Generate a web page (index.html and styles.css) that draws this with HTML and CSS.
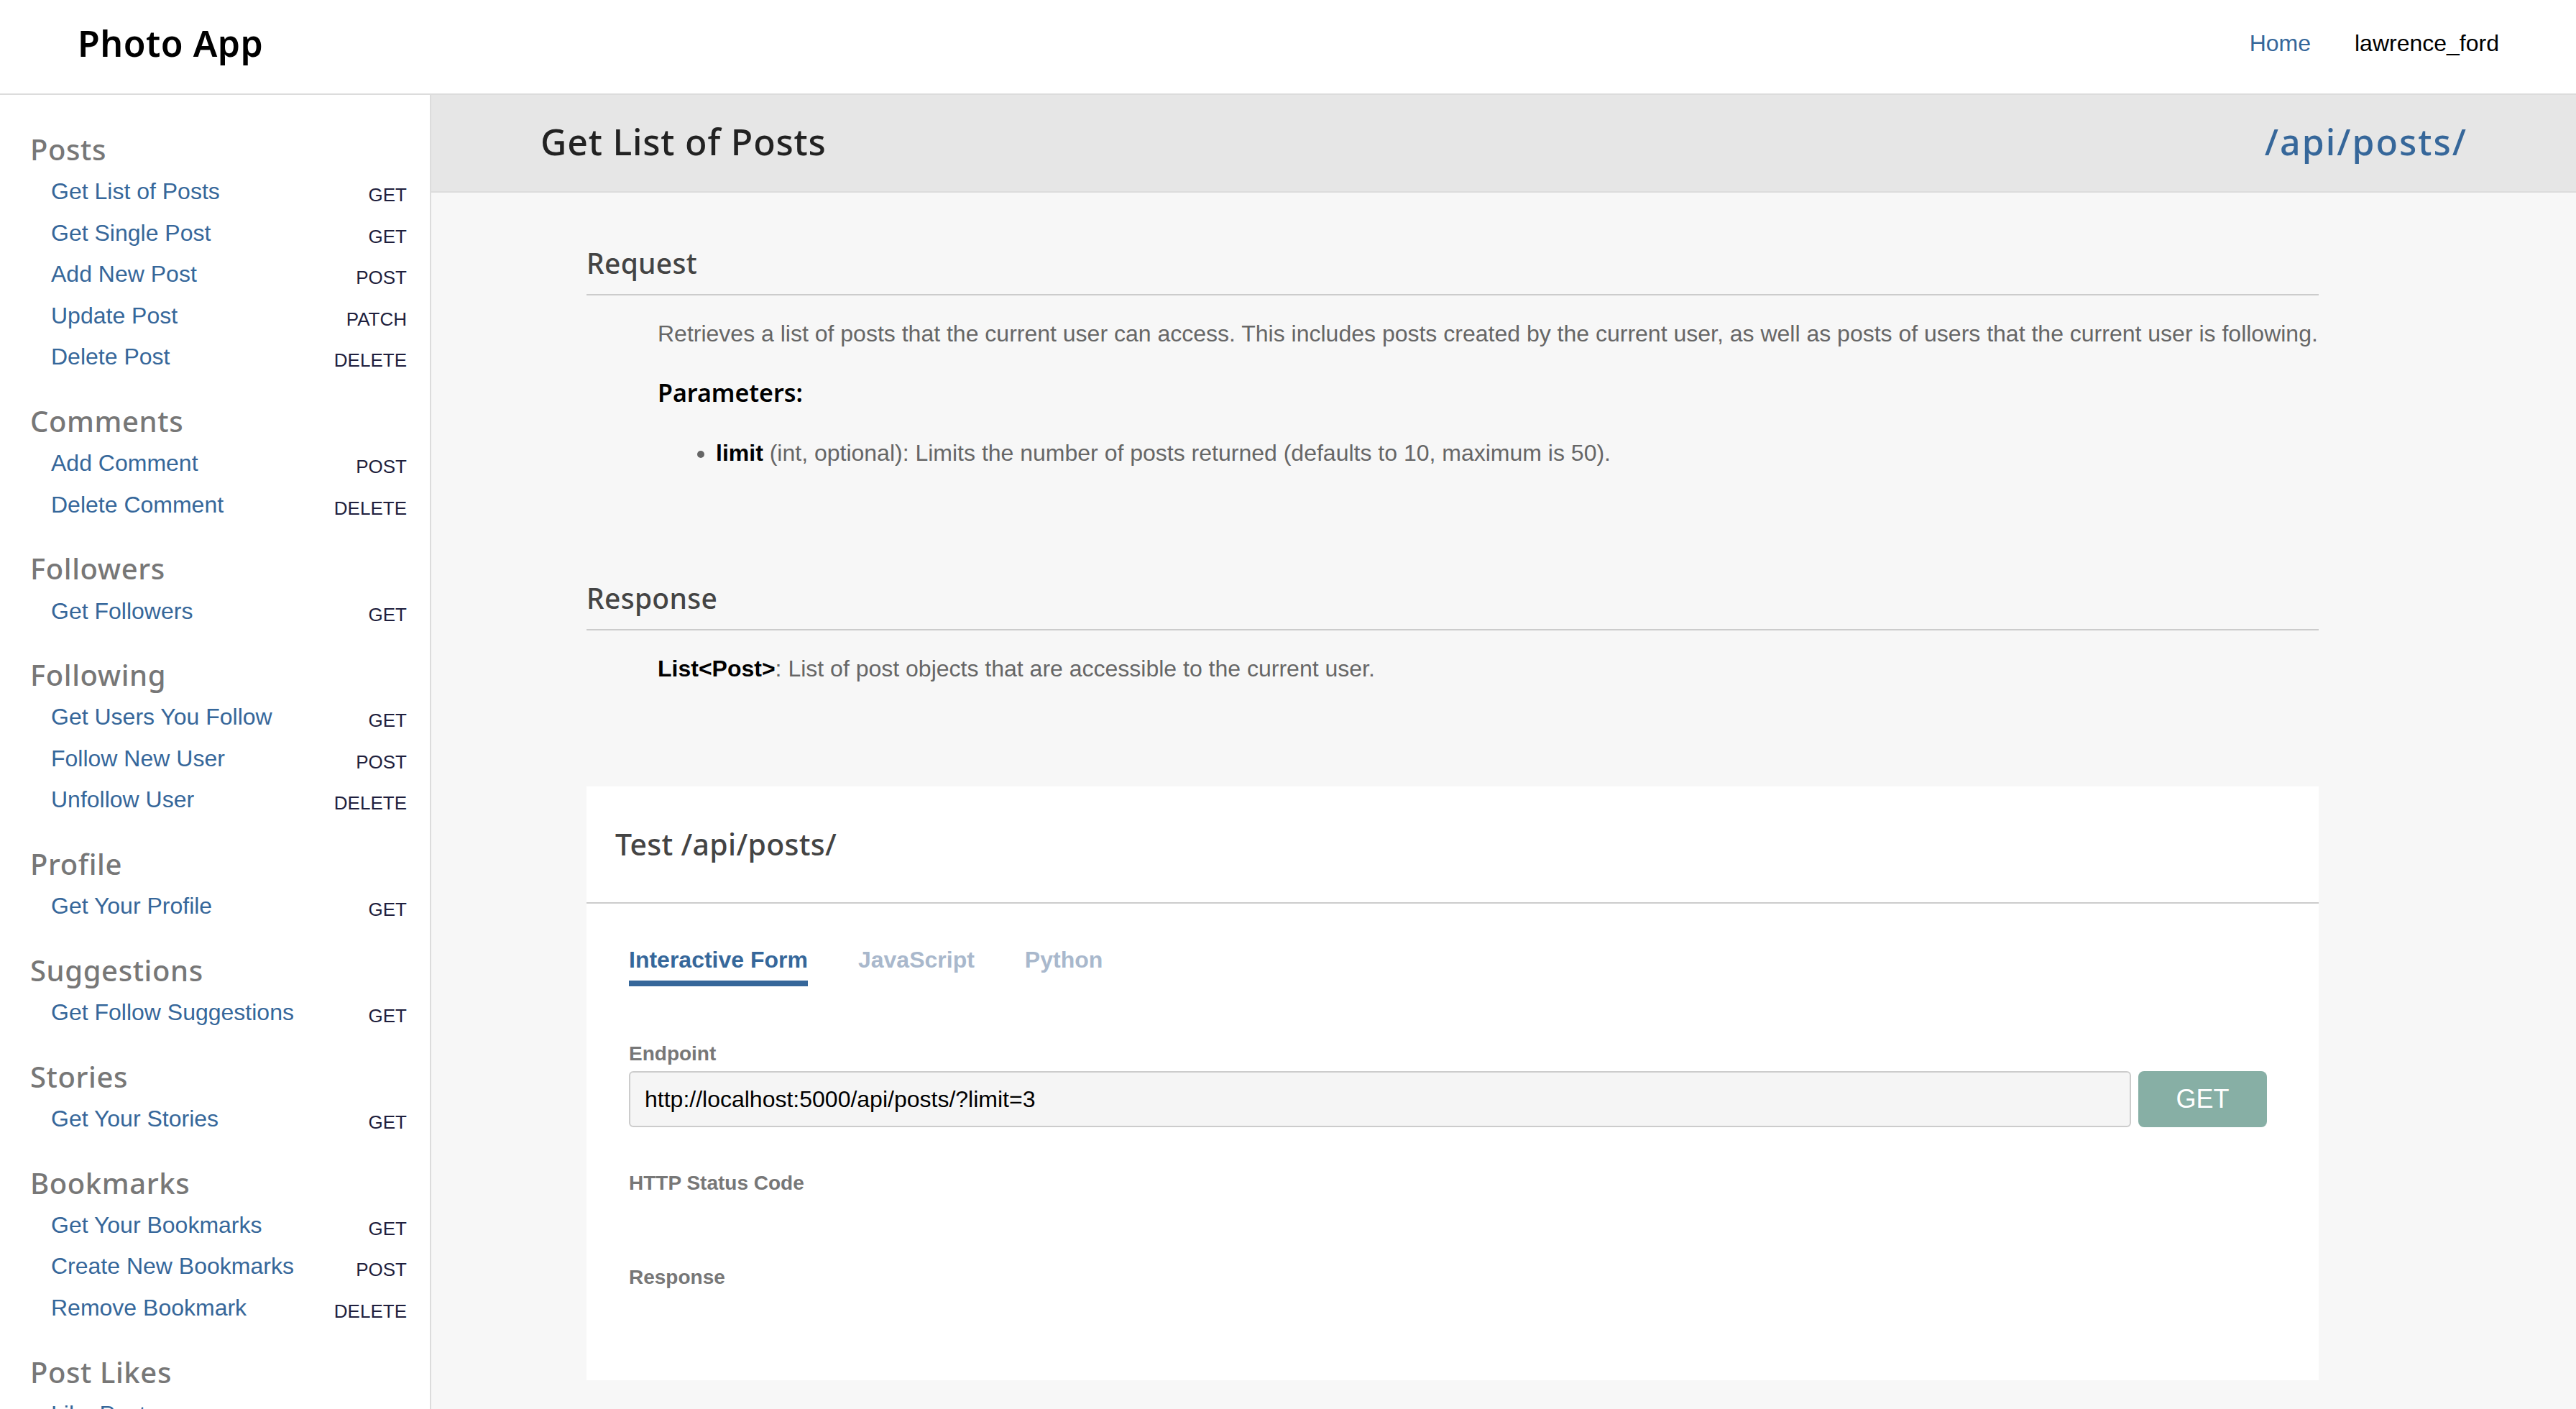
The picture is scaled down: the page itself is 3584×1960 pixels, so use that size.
FILE: index.html
```html
<!DOCTYPE html>
<html lang="en">
<head>
<meta charset="utf-8">
<title>Photo App – API Docs</title>
<link rel="stylesheet" href="styles.css">
</head>
<body>
<header class="topbar">
  <div class="brand">Photo App</div>
  <nav class="topnav">
    <a class="nav-link" href="#">Home</a>
    <span class="nav-user">lawrence_ford</span>
  </nav>
</header>
<div class="layout">
  <aside class="sidebar">
    <section class="side-group">
      <h3 class="side-title">Posts</h3>
      <ul class="side-list">
        <li class="side-item"><a href="#">Get List of Posts</a><span class="method">GET</span></li>
        <li class="side-item"><a href="#">Get Single Post</a><span class="method">GET</span></li>
        <li class="side-item"><a href="#">Add New Post</a><span class="method">POST</span></li>
        <li class="side-item"><a href="#">Update Post</a><span class="method">PATCH</span></li>
        <li class="side-item"><a href="#">Delete Post</a><span class="method">DELETE</span></li>
      </ul>
    </section>
    <section class="side-group">
      <h3 class="side-title">Comments</h3>
      <ul class="side-list">
        <li class="side-item"><a href="#">Add Comment</a><span class="method">POST</span></li>
        <li class="side-item"><a href="#">Delete Comment</a><span class="method">DELETE</span></li>
      </ul>
    </section>
    <section class="side-group">
      <h3 class="side-title">Followers</h3>
      <ul class="side-list">
        <li class="side-item"><a href="#">Get Followers</a><span class="method">GET</span></li>
      </ul>
    </section>
    <section class="side-group">
      <h3 class="side-title">Following</h3>
      <ul class="side-list">
        <li class="side-item"><a href="#">Get Users You Follow</a><span class="method">GET</span></li>
        <li class="side-item"><a href="#">Follow New User</a><span class="method">POST</span></li>
        <li class="side-item"><a href="#">Unfollow User</a><span class="method">DELETE</span></li>
      </ul>
    </section>
    <section class="side-group">
      <h3 class="side-title">Profile</h3>
      <ul class="side-list">
        <li class="side-item"><a href="#">Get Your Profile</a><span class="method">GET</span></li>
      </ul>
    </section>
    <section class="side-group">
      <h3 class="side-title">Suggestions</h3>
      <ul class="side-list">
        <li class="side-item"><a href="#">Get Follow Suggestions</a><span class="method">GET</span></li>
      </ul>
    </section>
    <section class="side-group">
      <h3 class="side-title">Stories</h3>
      <ul class="side-list">
        <li class="side-item"><a href="#">Get Your Stories</a><span class="method">GET</span></li>
      </ul>
    </section>
    <section class="side-group">
      <h3 class="side-title">Bookmarks</h3>
      <ul class="side-list">
        <li class="side-item"><a href="#">Get Your Bookmarks</a><span class="method">GET</span></li>
        <li class="side-item"><a href="#">Create New Bookmarks</a><span class="method">POST</span></li>
        <li class="side-item"><a href="#">Remove Bookmark</a><span class="method">DELETE</span></li>
      </ul>
    </section>
    <section class="side-group">
      <h3 class="side-title">Post Likes</h3>
      <ul class="side-list">
        <li class="side-item"><a href="#">Like Post</a><span class="method">POST</span></li>
        <li class="side-item"><a href="#">Unlike Post</a><span class="method">DELETE</span></li>
      </ul>
    </section>
  </aside>
  <main class="main">
    <div class="page-head">
      <h1 class="page-title">Get List of Posts</h1>
      <span class="page-path">/api/posts/</span>
    </div>
    <div class="content">
      <section class="doc-section">
        <h2 class="sec-title">Request</h2>
        <div class="sec-body">
          <p class="desc">Retrieves a list of posts that the current user can access. This includes posts created by the current user, as well as posts of users that the current user is following.</p>
          <h4 class="params-title">Parameters:</h4>
          <ul class="params-list">
            <li><strong>limit</strong> (int, optional): Limits the number of posts returned (defaults to 10, maximum is 50).</li>
          </ul>
        </div>
      </section>
      <section class="doc-section doc-section-response">
        <h2 class="sec-title">Response</h2>
        <div class="sec-body">
          <p class="desc"><strong>List&lt;Post&gt;</strong>: List of post objects that are accessible to the current user.</p>
        </div>
      </section>
      <section class="test-card">
        <div class="card-head">Test /api/posts/</div>
        <div class="card-body">
          <div class="tabs">
            <span class="tab tab-active">Interactive Form</span>
            <span class="tab">JavaScript</span>
            <span class="tab">Python</span>
          </div>
          <div class="field-label label-endpoint">Endpoint</div>
          <div class="input-row">
            <input class="url-input" type="text" value="http://localhost:5000/api/posts/?limit=3">
            <button class="get-btn" type="button">GET</button>
          </div>
          <div class="field-label label-status">HTTP Status Code</div>
          <div class="field-label label-response">Response</div>
        </div>
      </section>
    </div>
  </main>
</div>
</body>
</html>
```

FILE: styles.css
```css
* {
  box-sizing: border-box;
}

html, body {
  margin: 0;
  padding: 0;
}

body {
  font-family: "Liberation Sans", Arial, sans-serif;
  font-size: 32px;
  color: #000;
  background: #fff;
  height: 100vh;
  overflow: hidden;
}

a {
  text-decoration: none;
}

/* ---------- top bar ---------- */
.topbar {
  height: 132px;
  border-bottom: 2px solid #dcdcdc;
  display: flex;
  align-items: center;
  justify-content: space-between;
  padding: 0 107px 10px 108px;
  background: #fff;
}

.brand {
  font-family: "Noto Sans", sans-serif;
  font-weight: 600;
  font-size: 50px;
  color: #000;
  letter-spacing: 0.5px;
}

.topnav {
  display: flex;
  align-items: center;
  gap: 61px;
  font-size: 32px;
}

.nav-link {
  color: #36679a;
}

.nav-user {
  color: #000;
}

/* ---------- layout ---------- */
.layout {
  display: flex;
  min-height: calc(100vh - 132px);
}

.sidebar {
  width: 600px;
  flex: 0 0 600px;
  background: #fff;
  border-right: 2px solid #dcdcdc;
  padding: 46px 32px 0 42px;
}

.side-group {
  margin-bottom: 30.4px;
}

.side-title {
  margin: 0;
  font-family: "Noto Sans", sans-serif;
  font-weight: 500;
  font-size: 40px;
  line-height: 60px;
  letter-spacing: 0.6px;
  color: #777;
}

.side-list {
  list-style: none;
  margin: 0;
  padding: 0 0 0 29px;
}

.side-item {
  display: flex;
  justify-content: space-between;
  align-items: center;
  height: 57.5px;
}

.side-item a {
  color: #36679a;
  font-size: 32px;
}

.method {
  font-size: 26px;
  color: #1f1f3d;
  margin-top: 10px;
}

/* ---------- main ---------- */
.main {
  flex: 1;
  background: #f7f7f7;
  display: flex;
  flex-direction: column;
}

.page-head {
  height: 136px;
  background: #e6e6e6;
  border-bottom: 2px solid #dcdcdc;
  display: flex;
  align-items: center;
  justify-content: space-between;
  padding: 0 151px 4px 152px;
}

.page-title {
  margin: 0;
  font-family: "Noto Sans", sans-serif;
  font-weight: 500;
  font-size: 50px;
  letter-spacing: 0.8px;
  color: #222;
}

.page-path {
  font-family: "Noto Sans", sans-serif;
  font-weight: 500;
  font-size: 50px;
  letter-spacing: 2px;
  color: #36679a;
}

.content {
  padding: 74px 358px 40px 216px;
}

.sec-title {
  margin: 0;
  font-family: "Noto Sans", sans-serif;
  font-weight: 500;
  font-size: 39px;
  line-height: 48px;
  letter-spacing: 0.3px;
  color: #444;
  padding-bottom: 19px;
  border-bottom: 2px solid #cccccc;
}

.sec-body {
  padding-left: 99px;
}

.desc {
  margin: 29px -40px 0 0;
  font-size: 32px;
  line-height: 48px;
  color: #666;
}

.desc strong {
  color: #000;
}

.params-title {
  margin: 36px 0 0;
  font-family: "Noto Sans", sans-serif;
  font-weight: 600;
  font-size: 34px;
  line-height: 44px;
  color: #000;
}

.params-list {
  margin: 38px 0 0;
  padding-left: 81px;
  font-size: 32px;
  line-height: 48px;
  color: #666;
}

.params-list strong {
  color: #000;
}

.doc-section-response {
  margin-top: 154px;
}

/* ---------- test card ---------- */
.test-card {
  margin-top: 140px;
  background: #fff;
}

.card-head {
  height: 163px;
  border-bottom: 2px solid #cccccc;
  display: flex;
  align-items: center;
  padding: 0 40px 2px 40px;
  font-family: "Noto Sans", sans-serif;
  font-weight: 500;
  font-size: 41px;
  letter-spacing: 0.3px;
  color: #444;
}

.card-body {
  padding: 58px 72px 126px 59px;
}

.tabs {
  display: flex;
  gap: 70px;
}

.tab {
  font-weight: 700;
  font-size: 32px;
  line-height: 40px;
  color: #a9b8cc;
  padding-bottom: 9px;
  border-bottom: 8px solid transparent;
}

.tab-active {
  color: #36679a;
  border-bottom-color: #36679a;
}

.field-label {
  font-weight: 700;
  font-size: 28px;
  line-height: 34px;
  color: #777;
}

.label-endpoint {
  margin-top: 77px;
  margin-bottom: 7px;
}

.label-status {
  margin-top: 61px;
}

.label-response {
  margin-top: 97px;
}

.input-row {
  display: flex;
  gap: 10px;
  height: 78px;
}

.url-input {
  flex: 1;
  min-width: 0;
  height: 78px;
  background: #f5f5f5;
  border: 2px solid #cccccc;
  border-radius: 6px;
  padding: 0 20px;
  font-family: "Liberation Sans", Arial, sans-serif;
  font-size: 32px;
  color: #000;
}

.get-btn {
  width: 179px;
  height: 78px;
  background: #87afa5;
  color: #fff;
  border: none;
  border-radius: 8px;
  font-family: "Liberation Sans", Arial, sans-serif;
  font-size: 36px;
}
```
